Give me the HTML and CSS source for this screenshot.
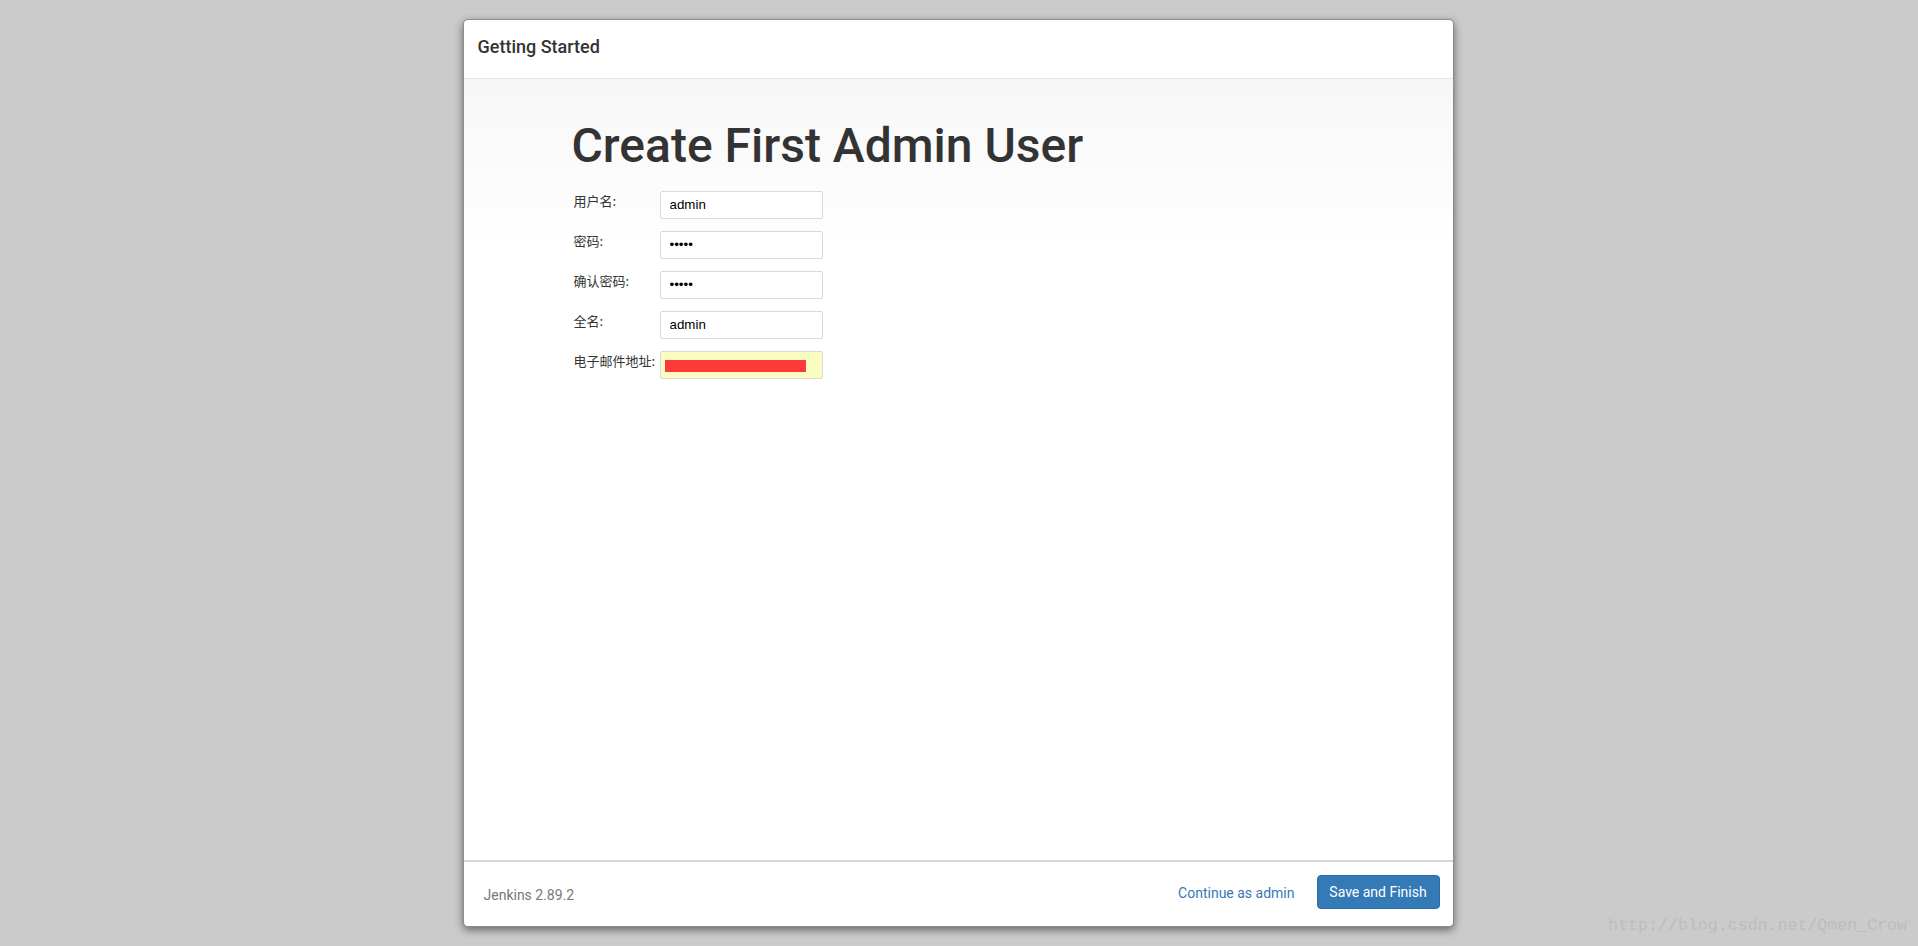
FILE: index.html
```html
<!DOCTYPE html>
<html lang="zh">
<head>
<meta charset="utf-8">
<title>Create First Admin User</title>
<link rel="stylesheet" href="styles.css">
</head>
<body>
<div class="dialog">
  <div class="dialog-header">
    <h4 class="dialog-title">Getting Started</h4>
  </div>
  <div class="dialog-body">
    <h1 class="page-title">Create First Admin User</h1>
    <form class="user-form">
      <label class="field-label">用户名:</label>
      <input class="field-input" type="text" value="admin">
      <label class="field-label">密码:</label>
      <input class="field-input" type="password" value="admin">
      <label class="field-label">确认密码:</label>
      <input class="field-input" type="password" value="admin">
      <label class="field-label">全名:</label>
      <input class="field-input" type="text" value="admin">
      <label class="field-label">电子邮件地址:</label>
      <div class="field-input email-field"><span class="redact"></span></div>
    </form>
  </div>
  <div class="dialog-footer">
    <div class="version">Jenkins 2.89.2</div>
    <div class="actions">
      <a class="link-continue" href="#">Continue as admin</a>
      <button class="btn-primary" type="button">Save and Finish</button>
    </div>
  </div>
</div>
<div class="watermark">http://blog.csdn.net/Qmen_Crow</div>
</body>
</html>
```
FILE: styles.css
```css
html, body {
  margin: 0;
  padding: 0;
}
body {
  background: #cbcbcb;
  font-family: Roboto, "Noto Sans CJK SC", sans-serif;
  color: #333;
  height: 946px;
  overflow: hidden;
}
.dialog {
  box-sizing: border-box;
  width: 991px;
  height: 908px;
  margin: 19px auto 0;
  position: relative;
  left: -1px;
  background: #fff;
  border: 1px solid rgba(0,0,0,0.45);
  border-radius: 5px;
  box-shadow: 0 3px 9px rgba(0,0,0,0.5);
  display: flex;
  flex-direction: column;
  overflow: hidden;
}
.dialog-header {
  height: 58px;
  border-bottom: 1px solid #e5e5e5;
  display: flex;
  align-items: center;
  padding-left: 14px;
  flex: none;
}
.dialog-title {
  margin: 0;
  font-size: 18px;
  font-weight: 500;
  color: #333;
  position: relative;
  top: -3px;
}
.dialog-body {
  flex: 1;
  background: linear-gradient(to bottom, #f7f7f7 0, #ffffff 170px);
  padding: 41px 0 0 108px;
}
.page-title {
  margin: 0 0 18px;
  font-size: 48px;
  line-height: 52.8px;
  font-weight: 500;
  color: #333;
}
.user-form {
  display: grid;
  grid-template-columns: 86px 163px;
  grid-auto-rows: 28px;
  row-gap: 12px;
  margin-left: 2px;
}
.field-label {
  font-family: "Noto Sans CJK SC", sans-serif;
  font-size: 13px;
  line-height: 19px;
  padding-top: 0;
  color: #333;
}
.field-input {
  box-sizing: border-box;
  height: 28px;
  width: 163px;
  border: 1px solid #d9d9d9;
  border-radius: 2px;
  padding: 0 9px;
  font-family: "Liberation Sans", Arial, sans-serif;
  font-size: 13.33px;
  color: #000;
  background: #fff;
  outline: none;
}
.email-field {
  background: #fafcc2;
  display: flex;
  align-items: center;
  padding: 0 0 0 4px;
}
.redact {
  display: block;
  width: 141px;
  height: 12px;
  background: #fd3a3a;
  margin-top: 2px;
}
.dialog-footer {
  flex: none;
  height: 64px;
  border-top: 2px solid #d6d6d6;
  display: flex;
  align-items: center;
  justify-content: space-between;
  padding: 0 13px 0 20px;
}
.version {
  font-size: 14px;
  color: #777;
  position: relative;
  top: 1px;
}
.actions {
  display: flex;
  align-items: center;
  gap: 22px;
}
.link-continue {
  font-size: 14px;
  color: #337ab7;
  text-decoration: none;
  position: relative;
  top: -1px;
}
.btn-primary {
  box-sizing: border-box;
  width: 123px;
  height: 34px;
  background: #337ab7;
  border: 1px solid #2e6da4;
  border-radius: 4px;
  color: #fff;
  font-family: Roboto, sans-serif;
  font-size: 14px;
  padding: 0;
  position: relative;
  top: -2px;
}
.watermark {
  position: absolute;
  right: 11px;
  bottom: 11px;
  font-family: "Liberation Mono", monospace;
  font-size: 16.6px;
  color: #bdbdb8;
  letter-spacing: 0;
}
```
